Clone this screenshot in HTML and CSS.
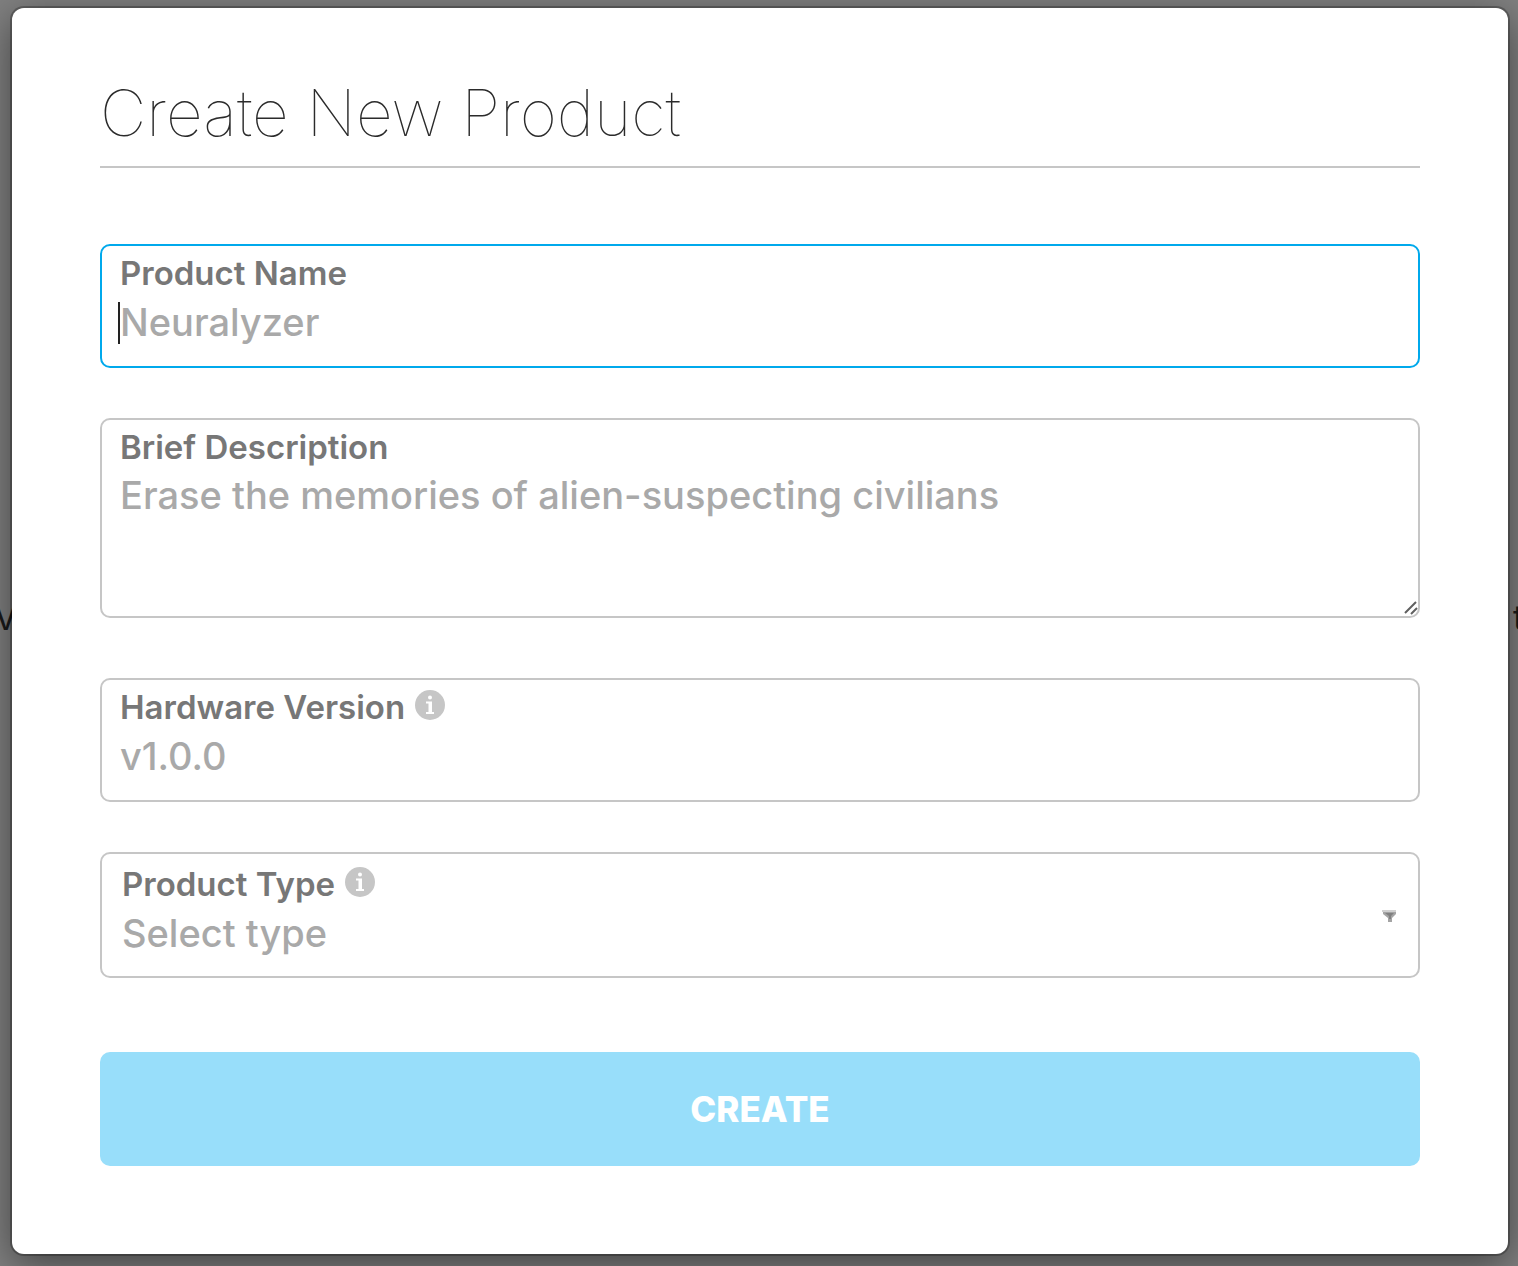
FILE: index.html
```html
<!DOCTYPE html>
<html lang="en">
<head>
<meta charset="utf-8">
<title>Create New Product</title>
<link rel="stylesheet" href="styles.css">
</head>
<body>
<div class="backdrop" aria-hidden="true"><span class="backdrop-start">V</span><span class="backdrop-end">t</span></div>
<main class="modal">
  <h1 class="title">Create New Product</h1>
  <form class="form">
    <div class="field field-active">
      <label class="label" for="name">Product Name</label>
      <input class="control" id="name" type="text" placeholder="Neuralyzer">
      <span class="caret"></span>
    </div>
    <div class="field field-description">
      <label class="label" for="description">Brief Description</label>
      <textarea class="control control-area" id="description" placeholder="Erase the memories of alien-suspecting civilians"></textarea>
      <svg class="grip" viewBox="0 0 16 16" aria-hidden="true"><path d="M3 13 14 2M9 14l6-6" fill="none" stroke="#606060" stroke-width="2"/></svg>
    </div>
    <div class="field">
      <label class="label" for="version">Hardware Version
        <svg class="info" viewBox="0 0 30 30" aria-hidden="true"><circle cx="15" cy="15" r="15" fill="#c6c6c6"/><circle cx="15" cy="7.5" r="2" fill="#fff"/><path d="M11 11.5h6v10.500h2v2h-8v-2h2.500v-8.500H11z" fill="#fff"/></svg>
      </label>
      <input class="control" id="version" type="text" placeholder="v1.0.0">
    </div>
    <div class="field field-select">
      <label class="label" for="type">Product Type
        <svg class="info" viewBox="0 0 30 30" aria-hidden="true"><circle cx="15" cy="15" r="15" fill="#c6c6c6"/><circle cx="15" cy="7.5" r="2" fill="#fff"/><path d="M11 11.5h6v10.500h2v2h-8v-2h2.500v-8.500H11z" fill="#fff"/></svg>
      </label>
      <select class="control" id="type"><option>Select type</option></select>
      <svg class="arrow" viewBox="0 0 16 14" aria-hidden="true"><path d="M1 1h14v2H1z" fill="#d0d0d0"/><path d="M2 3h13v2l-4 4v4H7V9L2 5z" fill="#a4a4a4"/><path d="M4 4h9l-3 3v3H8V7z" fill="#808080"/></svg>
    </div>
    <button class="submit" type="submit">CREATE</button>
  </form>
</main>
</body>
</html>
```
FILE: styles.css
```css
* { box-sizing: border-box; }

body {
  margin: 0;
  min-height: 100vh;
  padding: 8px 10px 12px 12px;
  background: #808080;
  font-family: Inter, "Liberation Sans", sans-serif;
  overflow: hidden;
}

/* Page text behind the dialog, running past both window edges */
.backdrop {
  position: absolute;
  top: 598px;
  left: -6px;
  right: -6px;
  display: flex;
  justify-content: space-between;
  color: #1a1a1a;
  font-size: 34px;
  line-height: 40px;
}

.modal {
  position: relative;
  padding: 72px 88px 88px;
  border-radius: 12px;
  background: #fff;
  box-shadow: 0 0 0 2px rgba(0, 0, 0, 0.25), 0 10px 40px rgba(0, 0, 0, 0.5);
}

.title {
  margin: 0 0 76px;
  padding-bottom: 20px;
  border-bottom: 2px solid #c6c6c6;
  color: #2b2b2b;
  font-size: 64px;
  font-weight: 100;
  line-height: 66px;
}

.form { display: flex; flex-direction: column; }

.field {
  position: relative;
  display: flex;
  flex-direction: column;
  height: 124px;
  margin-bottom: 50px;
  padding: 8px 18px;
  border: 2px solid #c6c6c6;
  border-radius: 10px;
}

.field-active { border-color: #00a9ec; }
.field-description { height: 200px; margin-bottom: 60px; }
.field-select { height: 126px; margin-bottom: 74px; padding: 11px 20px; }

.label {
  display: flex;
  align-items: center;
  gap: 10px;
  color: #777;
  font-size: 33px;
  font-weight: 600;
  line-height: 38px;
}

.info { width: 30px; height: 30px; margin-bottom: 4px; }

.control {
  width: 100%;
  height: 56px;
  margin: 2px 0 0;
  padding: 0;
  border: 0;
  outline: 0;
  background: none;
  color: #a9a9a9;
  font: 500 38px/44px Inter, "Liberation Sans", sans-serif;
  appearance: none;
}

.control::placeholder { color: #a9a9a9; opacity: 1; }
.control-area { flex: 1; resize: none; padding-top: 5px; }

.caret {
  position: absolute;
  left: 16px;
  top: 56px;
  width: 2px;
  height: 42px;
  background: #222;
}

.grip { position: absolute; right: 0; bottom: 0; width: 16px; height: 16px; }
.arrow { position: absolute; right: 21px; top: 55px; width: 16px; height: 14px; }

.submit {
  height: 114px;
  border: 0;
  border-radius: 10px;
  background: #98defa;
  color: #fff;
  font: 800 35px/40px Inter, "Liberation Sans", sans-serif;
}
```
